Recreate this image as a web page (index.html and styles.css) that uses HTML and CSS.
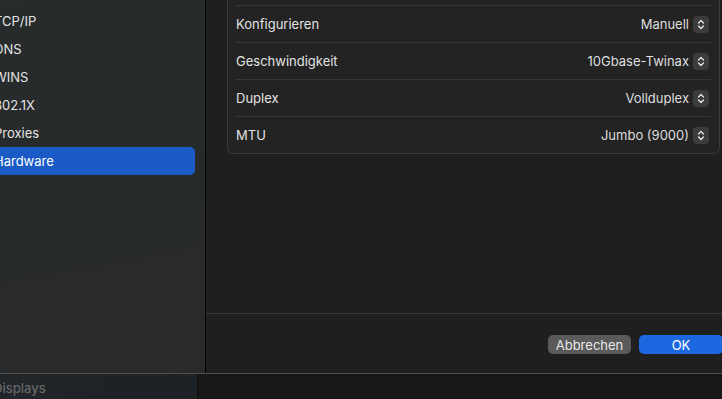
FILE: index.html
```html
<!DOCTYPE html>
<html>
<head>
    <title>Netzwerk - Hardware</title>
    <link rel="stylesheet" href="styles.css">
</head>
<body>
    <div class="window">
        <div class="sidebar">
            <div class="item">TCP/IP</div>
            <div class="item">DNS</div>
            <div class="item">WINS</div>
            <div class="item">802.1X</div>
            <div class="item">Proxies</div>
            <div class="item selected">Hardware</div>
        </div>
        <div class="main">
            <div class="content">
                <div class="panel">
                    <div class="row"></div>
                    <div class="row">
                        <span class="label">Konfigurieren</span>
                        <span class="popup">Manuell <span class="stepper"><svg width="8" height="11" viewBox="0 0 8 11"><path d="M1.5 4 L4 1.5 L6.5 4 M1.5 7 L4 9.5 L6.5 7" fill="none" stroke="#e6e6e6" stroke-width="1.3" stroke-linecap="round" stroke-linejoin="round"/></svg></span></span>
                    </div>
                    <div class="row">
                        <span class="label">Geschwindigkeit</span>
                        <span class="popup">10Gbase-Twinax <span class="stepper"><svg width="8" height="11" viewBox="0 0 8 11"><path d="M1.5 4 L4 1.5 L6.5 4 M1.5 7 L4 9.5 L6.5 7" fill="none" stroke="#e6e6e6" stroke-width="1.3" stroke-linecap="round" stroke-linejoin="round"/></svg></span></span>
                    </div>
                    <div class="row">
                        <span class="label">Duplex</span>
                        <span class="popup">Vollduplex <span class="stepper"><svg width="8" height="11" viewBox="0 0 8 11"><path d="M1.5 4 L4 1.5 L6.5 4 M1.5 7 L4 9.5 L6.5 7" fill="none" stroke="#e6e6e6" stroke-width="1.3" stroke-linecap="round" stroke-linejoin="round"/></svg></span></span>
                    </div>
                    <div class="row">
                        <span class="label">MTU</span>
                        <span class="popup">Jumbo (9000) <span class="stepper"><svg width="8" height="11" viewBox="0 0 8 11"><path d="M1.5 4 L4 1.5 L6.5 4 M1.5 7 L4 9.5 L6.5 7" fill="none" stroke="#e6e6e6" stroke-width="1.3" stroke-linecap="round" stroke-linejoin="round"/></svg></span></span>
                    </div>
                </div>
            </div>
            <div class="footer">
                <button class="btn cancel">Abbrechen</button>
                <button class="btn ok">OK</button>
            </div>
        </div>
    </div>
    <div class="below">
        <div class="below-side">Displays</div>
        <div class="below-main"></div>
    </div>
</body>
</html>
```

FILE: styles.css
```css
html, body {
    margin: 0;
    padding: 0;
    width: 722px;
    height: 399px;
    overflow: hidden;
    background: #171717;
    font-family: Inter, "Liberation Sans", sans-serif;
    font-size: 13px;
    color: #dedede;
}

.window {
    display: flex;
    height: 373px;
    border-bottom: 1px solid #505050;
}

.sidebar {
    width: 206px;
    border-right: 1px solid #000;
    background: linear-gradient(170deg, #262b2c 0%, #272a2b 55%, #2a2a2b 100%);
    padding-top: 7px;
    box-sizing: border-box;
}

.item {
    height: 28px;
    line-height: 28px;
    text-indent: -6px;
    margin-right: 10px;
    color: #e4e4e4;
    font-size: 13px;
}

.item.selected {
    background: #1a5bc6;
    color: #fff;
    border-radius: 0 5px 5px 0;
}

.main {
    flex: 1;
    display: flex;
    flex-direction: column;
    background: #1f1f1f;
}

.content {
    flex: 1;
    padding: 0 2px 0 21px;
}

.panel {
    margin-top: -32px;
    background: #232323;
    border: 1px solid #3a3a3a;
    border-radius: 6px;
}

.row {
    height: 36px;
    margin: 0 8px;
    display: flex;
    align-items: center;
    justify-content: space-between;
    border-top: 1px solid #363636;
}

.row:first-child {
    border-top: none;
}

.label {
    color: #e2e2e2;
}

.popup {
    display: flex;
    align-items: center;
    gap: 4px;
    color: #dedede;
    margin-right: 2px;
}

.stepper {
    width: 16px;
    height: 17px;
    border-radius: 4px;
    background: #3c3c3c;
    display: flex;
    align-items: center;
    justify-content: center;
}

.footer {
    height: 59px;
    border-top: 1px solid #3a3a3a;
    display: flex;
    align-items: center;
    justify-content: flex-end;
    gap: 8px;
    margin-right: -1px;
}

.btn {
    height: 19px;
    border: none;
    border-radius: 5px;
    font-family: Inter, "Liberation Sans", sans-serif;
    font-size: 13px;
    color: #e8e8e8;
    padding: 0;
    margin-top: 2px;
}

.cancel {
    width: 83px;
    background: #5a5a5a;
}

.ok {
    width: 84px;
    background: #1c68e0;
    color: #fff;
}

.below {
    display: flex;
    height: 25px;
}

.below-side {
    width: 197px;
    background: linear-gradient(90deg, #20262a 0%, #1e2224 60%, #1c2225 100%);
    border-right: 1px solid #111;
    color: #676767;
    line-height: 28px;
    text-indent: -7px;
    font-weight: 500;
}

.below-main {
    flex: 1;
    background: #171717;
}
```
